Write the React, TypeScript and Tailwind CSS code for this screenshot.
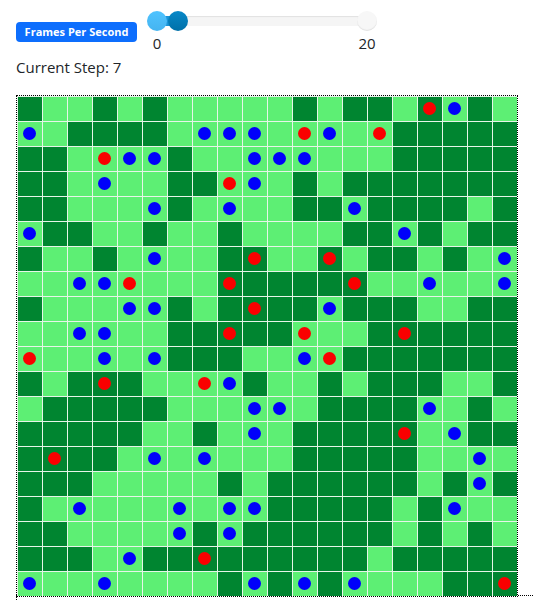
import { useState } from "react";

// D = dense vegetation, L = light vegetation
const TERRAIN = [
  "DLLDLDLLLLLDLDDLDLDL",
  "LLDDDDLLLLLLLLLDDDDD",
  "DDLLLLDLLLLLLLLDDDDD",
  "DDLLLLDDLLLDLDDDDDDD",
  "DDLLLLDLLLLDDLDDDDLD",
  "LDDLLDLLDLLLLDDLDLDD",
  "DLLDLLLLDDLLDLDDLDLL",
  "LLLLLLLLDDDDDDLLLLLL",
  "DLLLLLDLDDDDLDDDLLDD",
  "LLLLLLDDDDDLLLDDDDDD",
  "LLLLLLDDDLLLLDDDDDDD",
  "DLDDDLLLLDLLDLDDDLLD",
  "LDDDDDLLLLLLDDDDLLDL",
  "DDDDDLLDLLLDDDDDLLDD",
  "DDDDLLLLLLLDDDDDLLLL",
  "DDDLLLLLDLDDDDDDLDLD",
  "DLLLLLLLLLDDDDDLDLLL",
  "DDLLLLLDLDDDDDDLDLDL",
  "DDDLLDDDDDDDDDLDDDDD",
  "LLLLLLLLDLDLDLLLLDDD",
];

// Columns occupied by each species, row by row
const BLUE: number[][] = [
  [17], [0, 7, 8, 9, 12], [4, 5, 9, 10, 11], [3, 9], [5, 8, 13],
  [0, 15], [5, 19], [2, 3, 16, 19], [4, 5, 12], [2, 3],
  [3, 5, 11], [8], [9, 10, 16], [9, 17], [5, 7, 18],
  [18], [2, 6, 8, 9, 17], [6, 8], [4], [0, 3, 9, 11, 13],
];
const RED: number[][] = [
  [16], [11, 14], [3], [8], [],
  [], [9, 12], [4, 8, 13], [9], [8, 11, 15],
  [0, 12], [3, 7], [], [15], [1],
  [], [], [], [7], [19],
];

function Cell({ row, col }: { row: number; col: number }) {
  const dense = TERRAIN[row][col] === "D";
  const blue = BLUE[row].includes(col);
  const red = RED[row].includes(col);
  return (
    <div className={`border-t border-l border-[#e6f5e8] p-[5px] ${dense ? "bg-[#008530]" : "bg-[#5def74]"}`}>
      {(blue || red) && <div className={`size-[13px] rounded-full ${blue ? "bg-[#0000fa]" : "bg-[#fa0000]"}`} />}
    </div>
  );
}

function FpsSlider() {
  const [fps, setFps] = useState(2);
  return (
    <div className="w-[230px]">
      <div className="grid items-center">
        <div className="col-start-1 row-start-1 mx-[10px] h-[10px] bg-[#f5f5f5] shadow-[inset_0_1px_1px_#e2e2e2]">
          <div className="h-full bg-[#1a94d8]" style={{ width: `${fps * 5}%` }} />
        </div>
        <div className="col-start-1 row-start-1 flex justify-between">
          <span className="size-5 rounded-full bg-linear-to-b from-[#4fc3ff] to-[#45b4f0]" />
          <span className="size-5 rounded-full bg-[#f7f7f7] shadow-[inset_0_-1px_1px_#e2e2e2]" />
        </div>
        <input
          id="fps"
          type="range"
          min={0}
          max={20}
          value={fps}
          onChange={(e) => setFps(Number(e.target.value))}
          className="col-start-1 row-start-1 m-0 h-5 w-full appearance-none bg-transparent [&::-webkit-slider-thumb]:size-5 [&::-webkit-slider-thumb]:appearance-none [&::-webkit-slider-thumb]:rounded-full [&::-webkit-slider-thumb]:bg-linear-to-b [&::-webkit-slider-thumb]:from-[#0888c8] [&::-webkit-slider-thumb]:to-[#0070a8]"
        />
      </div>
      <div className="flex justify-between">
        <span className="w-5 text-center">0</span>
        <span className="w-5 text-center">20</span>
      </div>
    </div>
  );
}

export default function App() {
  return (
    <main className="bg-white pl-4 font-['Open_Sans','Noto_Sans',sans-serif] text-[15px] leading-6 text-[#212529]">
      <header className="flex items-start gap-[10px] pt-[11px]">
        <label htmlFor="fps" className="mt-[11px] h-5 w-[121px] rounded bg-[#0d6efd] text-center text-[11px] leading-5 font-bold whitespace-nowrap text-white">
          Frames Per Second
        </label>
        <FpsSlider />
      </header>
      <p className="mb-4">Current Step: 7</p>
      <div className="relative z-10 grid w-[502px] grid-cols-[repeat(20,25px)] auto-rows-[25px] border border-dotted border-black">
        {TERRAIN.map((line, row) => [...line].map((_, col) => <Cell key={`${row}-${col}`} row={row} col={col} />))}
      </div>
      <div className="-mt-0.5 h-[5px] border-t border-l border-dotted border-black" />
    </main>
  );
}
